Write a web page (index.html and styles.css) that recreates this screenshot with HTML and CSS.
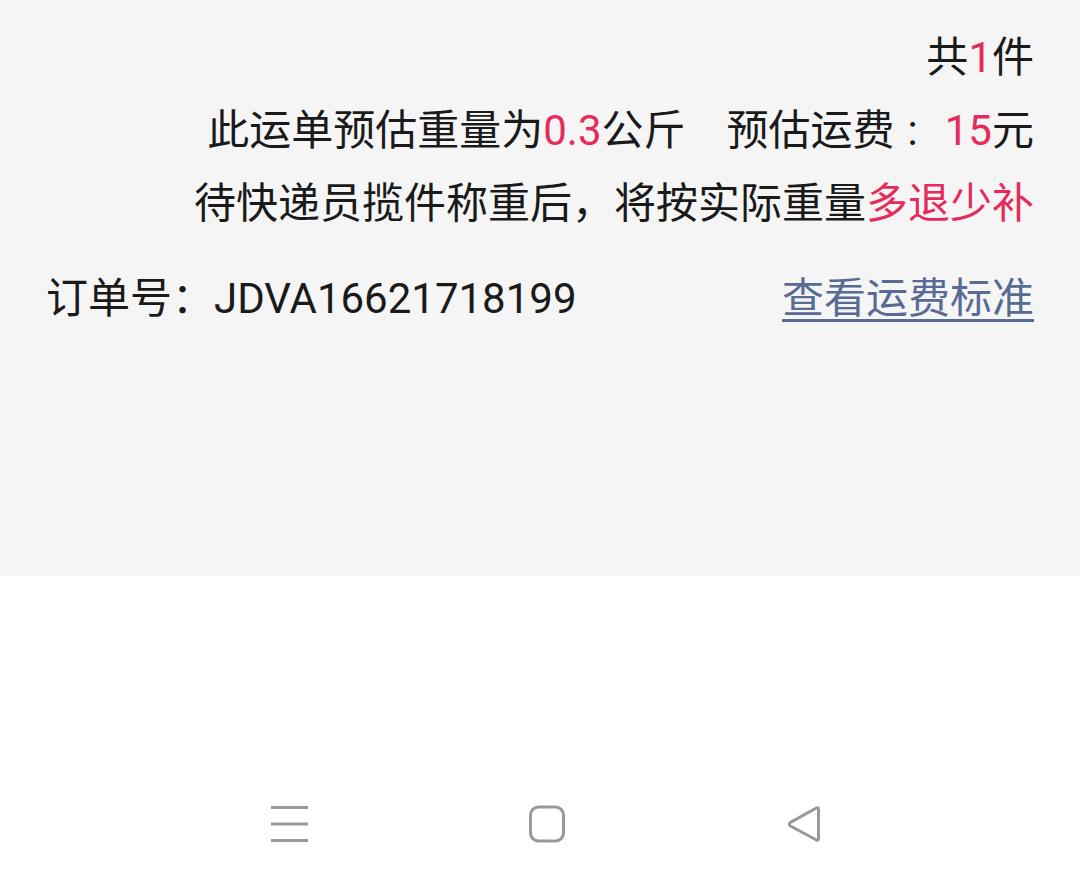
FILE: index.html
```html
<!DOCTYPE html>
<html lang="zh-CN">
<head>
    <meta charset="UTF-8">
    <meta name="viewport" content="width=device-width, initial-scale=1.0">
    <title>运单详情</title>
    <link rel="stylesheet" href="styles.css">
</head>
<body>
    <div class="sheet">
        <div class="line">共<span class="hl">1</span>件</div>
        <div class="line">此运单预估重量为<span class="hl">0.3</span>公斤<span class="fee">预估运费<span class="sep">:</span><span class="hl">15</span>元</span></div>
        <div class="line">待快递员揽件称重后，将按实际重量<span class="hl">多退少补</span></div>

        <div class="order-row">
            <span class="order-no">订单号：JDVA16621718199</span>
            <a class="fee-link" href="#">查看运费标准</a>
        </div>
    </div>

    <div class="nav-bar">
        <svg class="nav-icon" width="40" height="40" viewBox="0 0 40 40">
            <path d="M2 3.5H39M2 20H39M2 36.5H39" stroke="#999" stroke-width="3" fill="none"/>
        </svg>
        <svg class="nav-icon" width="40" height="40" viewBox="0 0 40 40">
            <rect x="3.5" y="3" width="33" height="34" rx="8" stroke="#999" stroke-width="3" fill="none"/>
        </svg>
        <svg class="nav-icon" width="40" height="40" viewBox="0 0 40 40">
            <path d="M33.5 5.5 L33.5 34.5 Q33.5 37 31 35.8 L5.5 22 Q3 20.2 5.5 18.4 L31 4.2 Q33.5 3 33.5 5.5 Z" stroke="#999" stroke-width="3" fill="none" stroke-linejoin="round"/>
        </svg>
    </div>
</body>
</html>
```

FILE: styles.css
```css
body {
    margin: 0;
    background: #fff;
    font-family: Roboto, "Noto Sans CJK SC", sans-serif;
    color: #1a1a1a;
}
.sheet {
    background: #f5f5f5;
    height: 576px;
    box-sizing: border-box;
    padding: 21px 46px 0;
    font-size: 42px;
}
.line {
    line-height: 73px;
    text-align: right;
    white-space: nowrap;
}
.hl {
    color: #e62a5c;
}
.fee {
    margin-left: 41px;
}
.sep {
    margin: 0 27px 0 13px;
}
.order-row {
    display: flex;
    justify-content: space-between;
    align-items: center;
    margin-top: 22px;
    line-height: 73px;
}
.fee-link {
    color: #576b95;
    text-decoration: underline;
    text-decoration-thickness: 3px;
    text-underline-offset: 6px;
}
.nav-bar {
    display: grid;
    grid-template-columns: repeat(3, 258px);
    justify-items: center;
    padding: 228px 0 0 160px;
}
.nav-icon {
    display: block;
}
```
